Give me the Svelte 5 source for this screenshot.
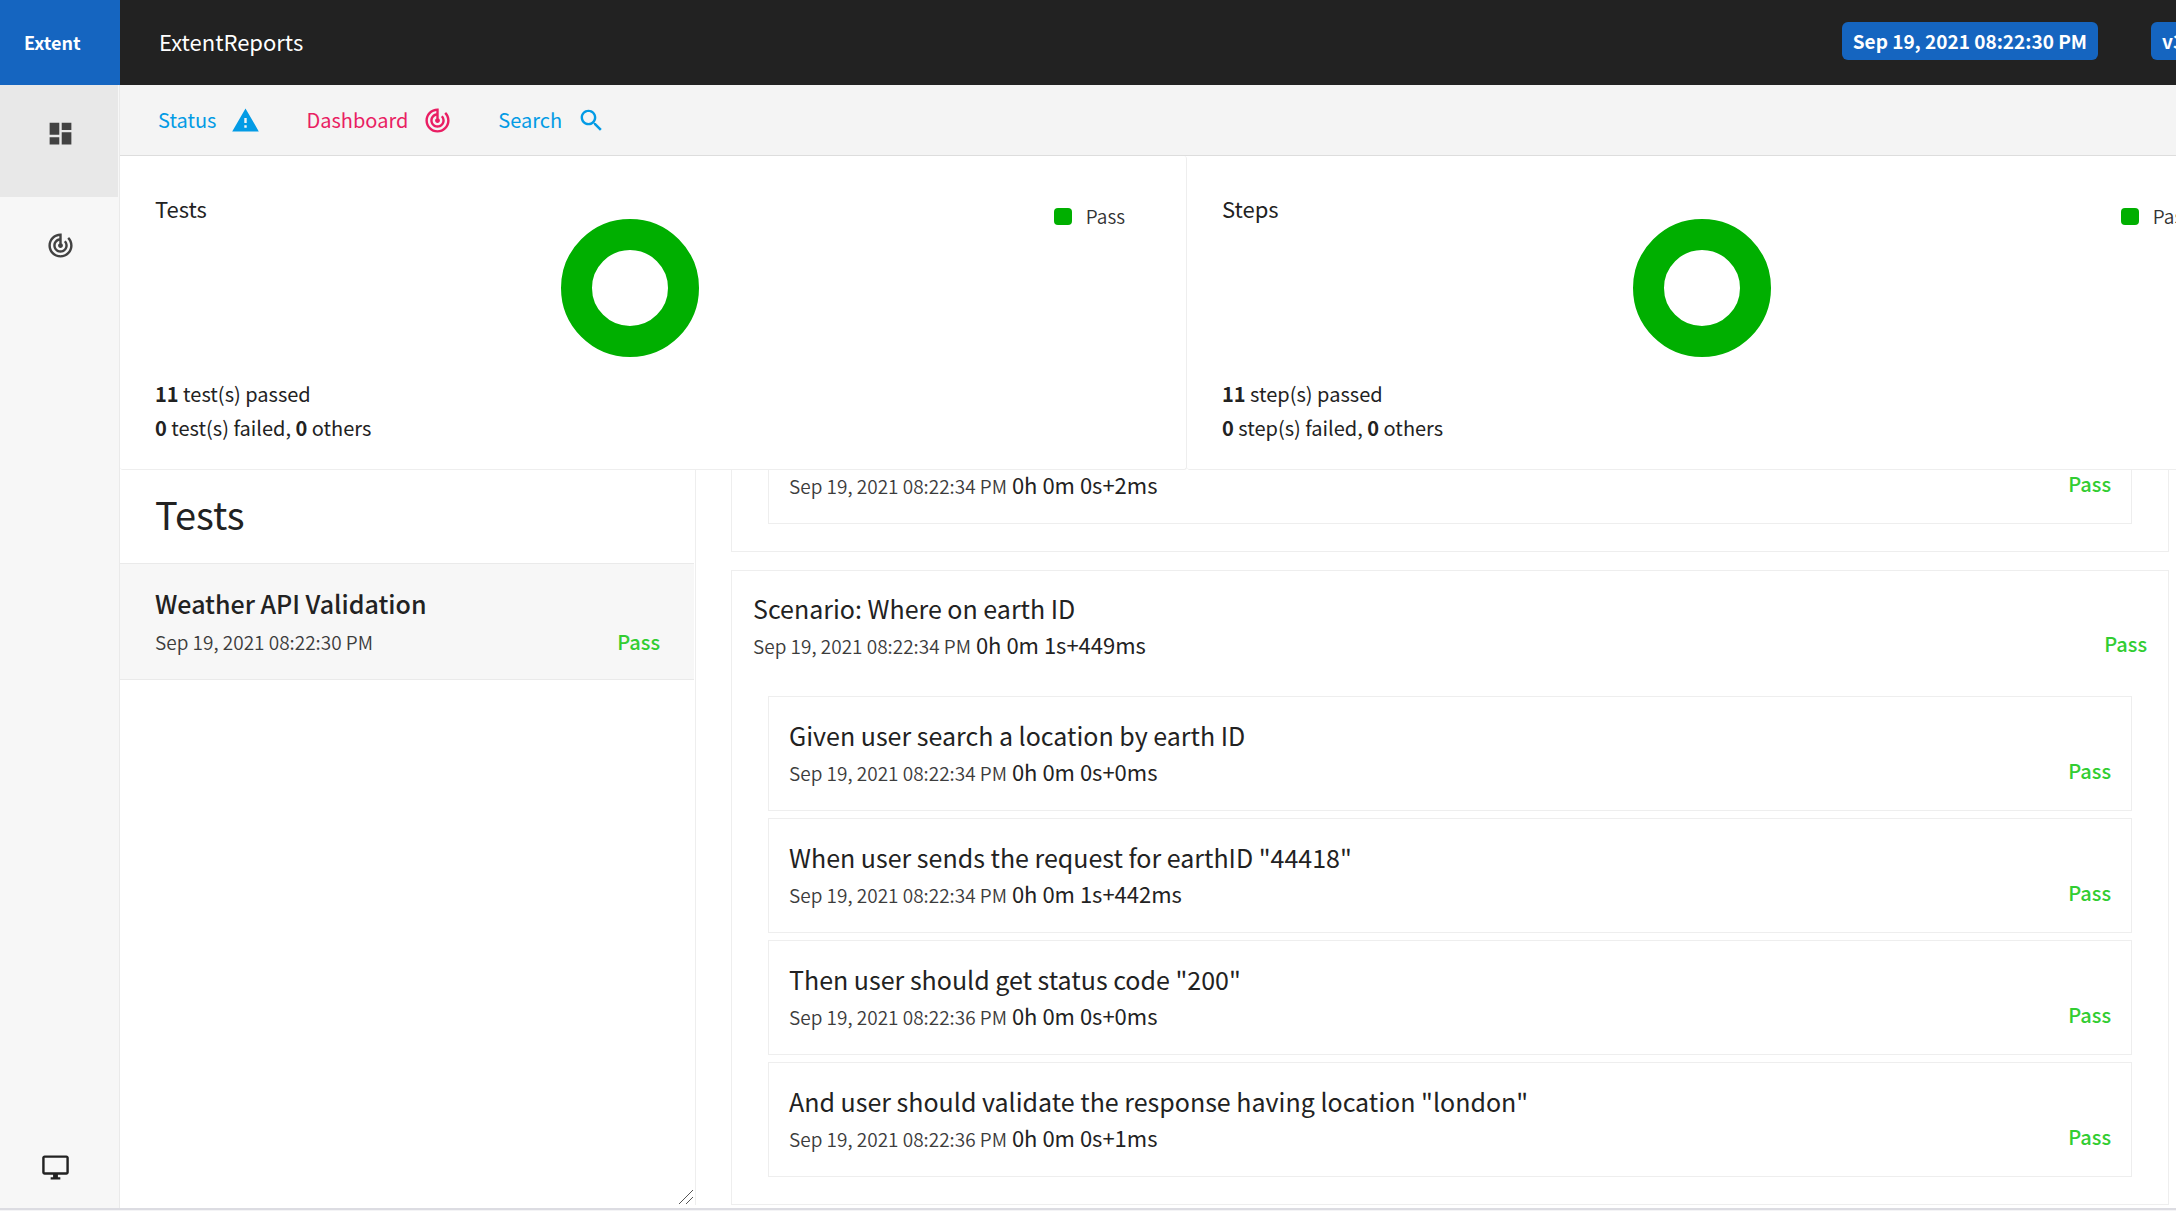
<script>
  const icons = {
    dashboard: 'M3 13h8V3H3v10zm0 8h8v-6H3v6zm10 0h8V11h-8v10zm0-18v6h8V3h-8z',
    track:
      'M19.07 4.93l-1.41 1.41C19.1 7.79 20 9.79 20 12c0 4.42-3.58 8-8 8s-8-3.58-8-8c0-4.08 3.05-7.44 7-7.93v2.02C8.16 6.57 6 9.03 6 12c0 3.31 2.69 6 6 6s6-2.69 6-6c0-1.66-.67-3.16-1.76-4.24l-1.41 1.41C15.55 9.9 16 10.9 16 12c0 2.21-1.79 4-4 4s-4-1.79-4-4c0-1.86 1.28-3.41 3-3.86v2.14c-.6.35-1 .98-1 1.72 0 1.1.9 2 2 2s2-.9 2-2c0-.74-.4-1.38-1-1.72V2h-1C6.48 2 2 6.48 2 12s4.48 10 10 10 10-4.48 10-10c0-2.76-1.12-5.26-2.93-7.07z',
    warning: 'M1 21h22L12 2 1 21zm12-3h-2v-2h2v2zm0-4h-2v-4h2v4z',
    search:
      'M15.5 14h-.79l-.28-.27C15.41 12.59 16 11.11 16 9.5 16 5.91 13.09 3 9.5 3S3 5.91 3 9.5 5.91 16 9.5 16c1.61 0 3.09-.59 4.23-1.57l.27.28v.79l5 4.99L20.49 19l-4.99-5zm-6 0C7.01 14 5 11.99 5 9.5S7.01 5 9.5 5 14 7.01 14 9.5 11.99 14 9.5 14z',
    desktop:
      'M21 2H3c-1.1 0-2 .9-2 2v12c0 1.1.9 2 2 2h7v2H8v2h8v-2h-2v-2h7c1.1 0 2-.9 2-2V4c0-1.1-.9-2-2-2zm0 14H3V4h18v12z'
  };

  const charts = [
    { title: 'Tests', unit: 'test(s)', passed: 11, failed: 0, others: 0 },
    { title: 'Steps', unit: 'step(s)', passed: 11, failed: 0, others: 0 }
  ];

  const steps = [
    { title: 'Given user search a location by earth ID', time: 'Sep 19, 2021 08:22:34 PM', took: '0h 0m 0s+0ms' },
    { title: 'When user sends the request for earthID "44418"', time: 'Sep 19, 2021 08:22:34 PM', took: '0h 0m 1s+442ms' },
    { title: 'Then user should get status code "200"', time: 'Sep 19, 2021 08:22:36 PM', took: '0h 0m 0s+0ms' },
    { title: 'And user should validate the response having location "london"', time: 'Sep 19, 2021 08:22:36 PM', took: '0h 0m 0s+1ms' }
  ];
</script>

{#snippet icon(name)}
  <svg class="icon" viewBox="0 0 24 24" aria-hidden="true"><path d={icons[name]} /></svg>
{/snippet}

{#snippet meta(time, took)}
  <div class="meta">
    <span><span class="time">{time}</span> {took}</span>
    <span class="pass">Pass</span>
  </div>
{/snippet}

<div class="window">
  <div class="app">
    <header>
      <a class="logo" href="#top">Extent</a>
      <span class="report">ExtentReports</span>
      <span class="badge">Sep 19, 2021 08:22:30 PM</span>
      <span class="badge">v3.1.5</span>
    </header>

    <div class="body">
      <nav class="side" aria-label="Views">
        <a class="active" href="#tests" aria-label="Tests">{@render icon('dashboard')}</a>
        <a href="#charts" aria-label="Dashboard">{@render icon('track')}</a>
        <button class="theme" aria-label="Toggle theme">{@render icon('desktop')}</button>
      </nav>

      <main>
        <nav class="tools" aria-label="Tools">
          <button>Status {@render icon('warning')}</button>
          <button class="on">Dashboard {@render icon('track')}</button>
          <button>Search {@render icon('search')}</button>
        </nav>

        <section class="charts">
          {#each charts as c}
            <article class="card">
              <div class="chart">
                <h2>{c.title}</h2>
                <svg class="donut" viewBox="0 0 138 138" role="img" aria-label="{c.title}: all passed">
                  <circle cx="69" cy="69" r="53.5" />
                </svg>
                <div class="legend"><i></i>Pass</div>
              </div>
              <p><b>{c.passed}</b> {c.unit} passed</p>
              <p><b>{c.failed}</b> {c.unit} failed, <b>{c.others}</b> others</p>
            </article>
          {/each}
        </section>

        <div class="panes">
          <section class="list">
            <h1>Tests</h1>
            <a class="test" href="#weather">
              <strong>Weather API Validation</strong>
              <span class="row"><span class="time">Sep 19, 2021 08:22:30 PM</span><span class="pass">Pass</span></span>
            </a>
            <svg class="grip" viewBox="0 0 16 16" aria-hidden="true"><path d="M1 15L15 1M8 15l7-7" /></svg>
          </section>

          <section class="detail">
            <article class="scenario">
              <div class="step">{@render meta('Sep 19, 2021 08:22:34 PM', '0h 0m 0s+2ms')}</div>
            </article>
            <article class="scenario">
              <div class="head">
                <h3>Scenario: Where on earth ID</h3>
                {@render meta('Sep 19, 2021 08:22:34 PM', '0h 0m 1s+449ms')}
              </div>
              {#each steps as s}
                <div class="step">
                  <h3>{s.title}</h3>
                  {@render meta(s.time, s.took)}
                </div>
              {/each}
            </article>
          </section>
        </div>
      </main>
    </div>
    <footer></footer>
  </div>
</div>

<style>
  :global(body) {
    margin: 0;
    overflow: hidden;
  }
  .window {
    height: 100vh;
    overflow: hidden;
    font: 22px/34px 'Noto Sans CJK JP', 'Noto Sans', sans-serif;
    color: #222;
    background: #fff;
  }
  /* The report is a little wider than the window that shows it. */
  .app {
    width: calc(100% + 78px);
    height: 100%;
    display: flex;
    flex-direction: column;
  }
  h1, h2, h3, p { margin: 0; font-weight: 400; }
  a { color: inherit; text-decoration: none; }
  button { font: inherit; border: 0; padding: 0; background: none; cursor: pointer; }
  .icon { width: 29px; height: 29px; fill: currentColor; flex: none; }

  header {
    height: 85px;
    flex: none;
    display: flex;
    align-items: center;
    background: #222;
    color: #fff;
    white-space: nowrap;
  }
  .logo {
    box-sizing: border-box;
    width: 120px;
    padding-left: 24px;
    line-height: 85px;
    background: #1565c0;
    font-size: 18px;
    font-weight: 700;
  }
  .report { margin: 0 auto 4px 39px; }
  .badge {
    margin: 0 53px 3px 0;
    padding: 0 11px;
    border-radius: 6px;
    background: #1565c0;
    font-size: 19px;
    line-height: 38px;
    font-weight: 700;
  }
  .badge:last-child { margin-right: 24px; }

  .body { flex: 1; min-height: 0; display: flex; }
  .side {
    box-sizing: border-box;
    width: 120px;
    flex: none;
    display: flex;
    flex-direction: column;
    background: #f7f7f7;
    border-right: 1px solid #eaeaea;
    color: #424242;
  }
  .side a {
    height: 78px;
    margin-right: 1px;
    padding: 34px 0 0 2px;
    display: flex;
    justify-content: center;
  }
  .side .active { background: #e8e8e8; }
  .theme {
    margin: auto 0 26px 41px;
    align-self: flex-start;
    display: flex;
    color: #222;
  }

  main { flex: 1; min-width: 0; display: flex; flex-direction: column; }
  .tools {
    height: 70px;
    flex: none;
    display: flex;
    align-items: center;
    gap: 46px;
    padding-left: 38px;
    background: #f4f4f4;
    border-bottom: 1px solid #ddd;
  }
  .tools button { display: flex; align-items: center; gap: 15px; color: #039be5; font-size: 20px; }
  .tools .on { color: #e91e63; }

  .charts { display: grid; grid-template-columns: 1fr 1fr; flex: none; }
  .card {
    padding: 35px 34px 24px 35px;
    border-right: 1px solid #eee;
    border-bottom: 1px solid #eee;
    border-radius: 3px;
  }
  .chart { display: grid; grid-template-columns: auto 138px 1fr; height: 186px; }
  h2 { font-size: 22px; }
  .donut { width: 138px; height: 138px; margin-top: 28px; fill: none; stroke: #00af00; stroke-width: 31; }
  .chart h2 { padding-right: 354px; }
  .legend {
    justify-self: end;
    display: flex;
    align-items: center;
    height: 34px;
    gap: 14px;
    margin: 8px 27px 0 0;
    font-size: 19px;
    font-weight: 350;
    color: #333;
  }
  .legend i { width: 18px; height: 17px; border-radius: 4px; background: #00af00; }
  .card p { font-size: 20px; }
  b { font-weight: 600; }

  .panes { flex: 1; min-height: 0; display: flex; }
  .list {
    box-sizing: border-box;
    width: 576px;
    flex: none;
    position: relative;
    margin-bottom: 3px;
    border-right: 1px solid #eee;
  }
  h1 { padding: 14px 35px 19px; font-size: 38px; line-height: 60px; }
  .test {
    display: block;
    margin-right: 1px;
    padding: 19px 34px 20px 35px;
    background: #f7f7f7;
    border: solid #eaeaea;
    border-width: 1px 0;
  }
  .test strong { display: block; font-size: 25px; line-height: 40px; font-weight: 500; }
  .row, .meta { display: flex; justify-content: space-between; }
  .row { margin-top: 2px; }
  .time { font-size: 19px; font-weight: 350; color: #3c3c3c; }
  .pass { color: #32cd32; font-size: 20px; font-weight: 500; }
  .grip { position: absolute; right: 1px; bottom: 0; width: 16px; height: 16px; stroke: #555; stroke-width: 1; }

  .detail {
    flex: 1;
    min-width: 0;
    display: flex;
    flex-direction: column;
    justify-content: flex-end;
    overflow: hidden;
    gap: 18px;
    padding: 0 85px 3px 35px;
  }
  .scenario {
    flex: none;
    display: flex;
    flex-direction: column;
    gap: 7px;
    padding: 18px 36px 27px;
    border: 1px solid #eee;
  }
  .head { margin: 0 -15px 26px; }
  h3 { font-size: 25px; line-height: 38px; }
  .step {
    box-sizing: border-box;
    height: 115px;
    display: flex;
    flex-direction: column;
    justify-content: flex-end;
    padding: 0 20px 20px;
    border: 1px solid #eee;
  }
  footer { height: 3px; flex: none; background: linear-gradient(#dcdce2 2px, #f4f4f6 2px); }
</style>
